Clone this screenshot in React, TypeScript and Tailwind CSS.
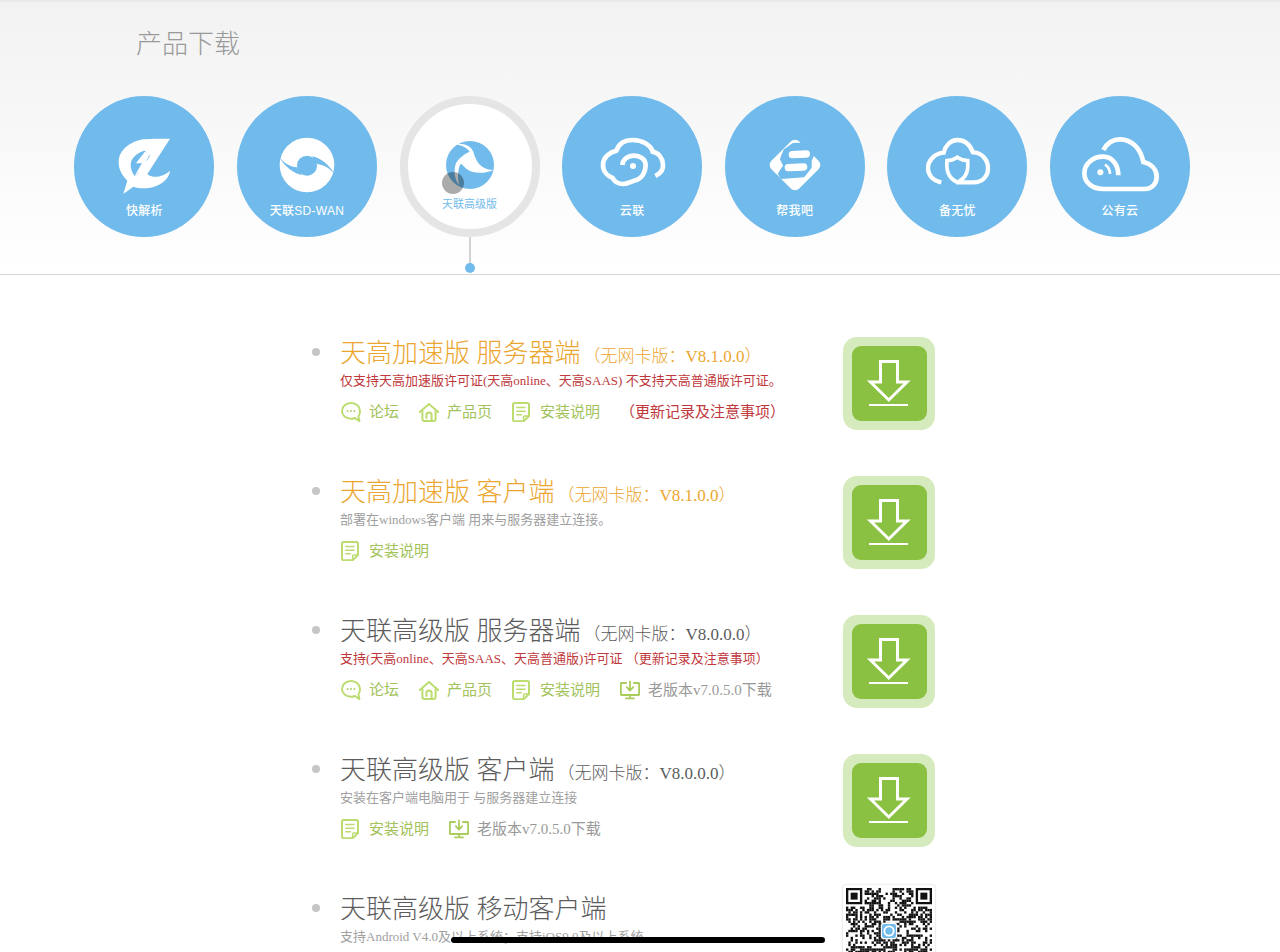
const CJK = "font-['Liberation_Serif','Noto_Sans_CJK_SC',serif]";

function FastIcon() {
  return (
    <svg viewBox="0 0 180 180" className="w-[60px] h-[60px] overflow-visible" fill="#fff">
      <path d="M168 14 C130 14 105 14 88 16 C45 24 14 50 14 85 C14 107 24 124 40 140 L28 180 L58 158 C78 165 105 165 128 155 C152 145 165 130 168 110 C155 122 135 130 118 128 C110 127 104 124 100 120 Z" />
      <path fill="#71bbec" d="M92 50 C70 55 50 72 50 92 C50 105 55 118 62 126 L72 118 L108 66 Z" />
      <path d="M92 54 L66 88 L84 88 L62 125 L114 82 L96 82 L110 56 Z" />
    </svg>
  );
}

function WanIcon() {
  return (
    <svg viewBox="0 0 180 180" className="w-[60px] h-[60px] overflow-visible">
      <circle cx="90" cy="93" r="82" fill="#fff" />
      <circle cx="90" cy="95" r="30" fill="#71bbec" />
      <path fill="#71bbec" d="M6 68 C22 88 40 98 60 100 L75 123 C50 118 25 100 6 68 Z" />
      <path fill="#71bbec" d="M174 122 C158 102 140 92 120 90 L105 67 C130 72 155 90 174 122 Z" />
    </svg>
  );
}

function AdvancedIcon() {
  return (
    <svg viewBox="0 0 180 180" className="w-[60px] h-[60px] overflow-visible">
      <circle cx="90" cy="93" r="72" fill="#71bbec" />
      <path fill="#fff" d="M45 30 C70 26 93 34 100 53 C107 76 117 106 160 108 C135 120 95 120 77 103 C67 93 63 86 60 93 C53 108 53 133 57 153 C45 138 40 113 47 90 C55 73 73 60 89 53 C80 40 65 34 45 30 Z" />
    </svg>
  );
}

function LinkCloudIcon() {
  return (
    <svg viewBox="0 0 180 180" className="w-[60px] h-[60px] overflow-visible" fill="none" stroke="#fff" strokeWidth="14" strokeLinecap="butt">
      <path d="M160 126 C176 118 185 106 183 90 C181 70 168 56 152 53 C146 32 120 18 93 18 C68 18 50 30 43 50 C20 56 3 72 3 93 C3 112 16 126 32 132 C38 144 50 150 63 150 C80 150 92 140 104 138 C120 132 131 114 131 93 C131 76 114 65 96 65 C78 65 62 76 61 93" />
      <circle cx="93" cy="96" r="9" fill="#fff" stroke="none" />
    </svg>
  );
}

function HelpIcon() {
  return (
    <svg viewBox="0 0 180 180" className="w-[60px] h-[60px] overflow-visible">
      <rect x="31" y="34" width="118" height="118" rx="18" fill="#fff" transform="rotate(45 90 93)" />
      <path fill="#71bbec" stroke="#71bbec" strokeWidth="10" strokeLinejoin="round" d="M85 32 L145 30 L150 45 L135 80 L135 100 L115 125 L50 130 L44 120 L60 95 L50 75 L60 50 Z" />
      <path stroke="#fff" strokeWidth="22" strokeLinecap="round" d="M82 62 L124 60 M70 101 L116 99" fill="none" />
    </svg>
  );
}

function BackupIcon() {
  return (
    <svg viewBox="0 0 180 180" className="w-[60px] h-[60px] overflow-visible" fill="none" stroke="#fff" strokeWidth="13">
      <path d="M43 145 C15 140 3 120 3 103 C3 78 25 58 50 56 C55 35 70 18 92 18 C115 18 130 35 138 55 C165 55 183 78 183 103 C183 128 165 145 140 145 L88 145" />
      <path strokeWidth="11" d="M91 70 C80 78 70 80 60 80 C58 105 60 130 91 145 C122 130 124 105 122 80 C112 80 102 78 91 70 Z" />
    </svg>
  );
}

function PublicIcon() {
  return (
    <svg viewBox="0 0 180 180" className="w-[60px] h-[60px] overflow-visible" fill="none" stroke="#fff" strokeWidth="14">
      <path d="M40 48 C52 26 70 16 90 16 C126 16 152 44 160 84 C184 90 200 106 200 128 C200 150 184 165 165 165 L40 165 C8 165 -17 146 -17 118 C-17 90 8 68 40 68 C66 68 85 92 85 124" />
      <path strokeWidth="8" d="M45 92 C54 98 60 108 60 120" />
      <circle cx="31" cy="115" r="9" fill="#fff" stroke="none" />
    </svg>
  );
}

function ChatIcon() {
  return (
    <svg viewBox="0 0 20 20" className="w-5 h-5 shrink-0" fill="none" stroke="#bcdc70" strokeWidth="2">
      <path d="M10 1 C5 1 1 4.4 1 9 C1 13.4 5 16.8 10 16.8 C11.4 16.8 13 16.4 14 16 L18.4 19.2 L17.4 14.4 C18.6 13 19 11 19 9 C19 4.4 15 1 10 1 Z" strokeLinejoin="round" />
      <circle cx="6.6" cy="9" r=".9" fill="#a9cc5a" stroke="none" />
      <circle cx="10" cy="9" r=".9" fill="#a9cc5a" stroke="none" />
      <circle cx="13.4" cy="9" r=".9" fill="#a9cc5a" stroke="none" />
    </svg>
  );
}

function HomeIcon() {
  return (
    <svg viewBox="0 0 20 20" className="w-5 h-5 shrink-0" fill="none" stroke="#bcdc70" strokeWidth="2" strokeLinecap="round" strokeLinejoin="round">
      <path d="M.8 10 L10 2 L19.2 10" />
      <path d="M3.4 9 L3.4 17 C3.4 18.2 4.2 19 5.4 19 L14.6 19 C15.8 19 16.6 18.2 16.6 17 L16.6 9" />
      <path d="M7.4 16 L7.4 13 C7.4 11.4 8.6 10.4 10 10.4 C11.4 10.4 12.6 11.4 12.6 13 L12.6 18.6" />
    </svg>
  );
}

function DocIcon() {
  return (
    <svg viewBox="0 0 20 20" className="w-5 h-5 shrink-0" fill="none" stroke="#bcdc70" strokeWidth="2" strokeLinecap="round" strokeLinejoin="round">
      <path d="M2.6 1 L15.4 1 C16.4 1 17 1.6 17 2.6 L17 14 L11.6 19.2 L2.6 19.2 C1.6 19.2 1 18.6 1 17.6 L1 2.6 C1 1.6 1.6 1 2.6 1 Z" />
      <path strokeWidth="1.5" d="M4.8 5.6 L13 5.6 M4.8 9.2 L13 9.2 M4.8 12.8 L9.4 12.8" />
      <path strokeWidth="1.5" d="M11.6 19 L11.6 15 C11.6 14.4 12 14 12.6 14 L17 14" />
    </svg>
  );
}

function OldIcon() {
  return (
    <svg viewBox="0 0 20 20" className="w-5 h-5 shrink-0" fill="none" stroke="#a9cc5a" strokeWidth="2" strokeLinecap="round" strokeLinejoin="round">
      <path d="M6 3 L1.8 3 C1.2 3 .8 3.4 .8 4 L.8 14 C.8 14.6 1.2 15 1.8 15 L18.2 15 C18.8 15 19.2 14.6 19.2 14 L19.2 4 C19.2 3.4 18.8 3 18.2 3 L14 3" />
      <path strokeWidth="1.7" d="M10 1.4 L10 10 M6.8 7.2 L10 10.6 L13.2 7.2" />
      <path strokeWidth="1.7" d="M6 18.4 L14 18.4 M10 15 L10 18.4" />
    </svg>
  );
}

function DownloadButton() {
  return (
    <div className="w-[92px] h-[93px] shrink-0 rounded-[14px] bg-[#d6ebbd] flex items-center justify-center">
      <div className="w-[75px] h-[75px] rounded-[9px] bg-[#8bc143]">
        <svg viewBox="0 0 75 75" className="w-[75px] h-[75px]" fill="none" stroke="#fff">
          <path strokeWidth="3" d="M28.5 15.5 L45.5 15.5 L45.5 36 L55 36 L36.8 54 L18.5 36 L28.5 36 Z" />
          <path strokeWidth="2.2" d="M17 59 L56 59" />
        </svg>
      </div>
    </div>
  );
}

function Qr() {
  const n = 37;
  const cells: React.ReactNode[] = [];
  const inFinder = (x: number, y: number) =>
    (x < 8 && y < 8) || (x >= n - 8 && y < 8) || (x < 8 && y >= n - 8);
  let seed = 12345;
  for (let y = 0; y < n; y++) {
    for (let x = 0; x < n; x++) {
      seed = (seed * 1103515245 + 12345) & 0x7fffffff;
      if (!inFinder(x, y) && ((seed >> 16) & 3) < 2) {
        cells.push(<rect key={`${x}-${y}`} x={x} y={y} width="1.02" height="1.02" />);
      }
    }
  }
  const finder = (x: number, y: number) => (
    <g key={`f${x}-${y}`}>
      <path fillRule="evenodd" d={`M${x} ${y}h7v7h-7z M${x + 1} ${y + 1}v5h5v-5z`} />
      <rect x={x + 2} y={y + 2} width="3" height="3" />
    </g>
  );
  return (
    <div className="w-[92px] h-[92px] shrink-0 -mt-[8px] bg-white rounded-[3px] shadow-[0_0_2px_rgba(0,0,0,0.25)] p-[3px]">
      <svg viewBox="0 0 37 37" className="w-[86px] h-[86px]" fill="#111">
        {cells}
        {finder(0, 0)}
        {finder(30, 0)}
        {finder(0, 30)}
        <rect x="15" y="15" width="7" height="7" rx="1" fill="#fff" />
        <rect x="15.5" y="15.5" width="6" height="6" rx="1" fill="#71bbec" />
        <circle cx="18.5" cy="18.5" r="2" fill="none" stroke="#fff" strokeWidth=".8" />
      </svg>
    </div>
  );
}

function Circle({ label, icon }: { label: string; icon: React.ReactNode }) {
  return (
    <div className="w-[140px] h-[141px] shrink-0 rounded-full bg-[#71bbec] flex flex-col items-center pt-[38px]">
      {icon}
      <div className="mt-[9px] text-[12px] leading-[16px] tracking-[0.3px] text-white font-['Liberation_Sans','Noto_Sans_CJK_SC',sans-serif] font-medium">
        {label}
      </div>
    </div>
  );
}

function ActiveCircle() {
  return (
    <div className="relative w-[140px] h-[141px] shrink-0">
      <div className="w-[140px] h-[141px] rounded-full bg-white border-[8px] border-[#e5e5e5] flex flex-col items-center pt-[30px]">
        <AdvancedIcon />
        <div className="mt-[2px] text-[11px] leading-[16px] text-[#71bbec] font-['Liberation_Sans','Noto_Sans_CJK_SC',sans-serif]">
          天联高级版
        </div>
      </div>
      <div className="absolute left-[42px] top-[76px] w-[22px] h-[22px] rounded-full bg-[rgba(0,0,0,0.33)]" />
      <div className="absolute left-[69px] top-[141px] w-[2px] h-[27px] bg-[#d3d3d3]" />
      <div className="absolute left-[65px] top-[167px] w-[10px] h-[10px] rounded-full bg-[#71bbec]" />
    </div>
  );
}

type LinkKind = "chat" | "home" | "doc" | "old" | "log";

function Links({ items }: { items: LinkKind[] }) {
  return (
    <div className={`flex items-center gap-5 mt-[10px] h-[22px] pl-px text-[15px] leading-[22px] ${CJK}`}>
      {items.map((k) => {
        if (k === "chat")
          return (
            <div key={k} className="flex items-center gap-2 text-[#a2c25a]">
              <ChatIcon />
              <span>论坛</span>
            </div>
          );
        if (k === "home")
          return (
            <div key={k} className="flex items-center gap-2 text-[#a2c25a]">
              <HomeIcon />
              <span>产品页</span>
            </div>
          );
        if (k === "doc")
          return (
            <div key={k} className="flex items-center gap-2 text-[#a2c25a]">
              <DocIcon />
              <span>安装说明</span>
            </div>
          );
        if (k === "old")
          return (
            <div key={k} className="flex items-center gap-2 text-[#999999]">
              <OldIcon />
              <span>老版本v7.0.5.0下载</span>
            </div>
          );
        return (
          <span key={k} className="text-[#c0383c]">
            （更新记录及注意事项）
          </span>
        );
      })}
    </div>
  );
}

function Row({
  title,
  version,
  tone,
  sub,
  subRed,
  links,
  qr,
}: {
  title: string;
  version?: string;
  tone: "orange" | "gray";
  sub: string;
  subRed?: boolean;
  links?: LinkKind[];
  qr?: boolean;
}) {
  const color = tone === "orange" ? "text-[#eba630]" : "text-[#5c5c5c]";
  return (
    <div className="flex items-start justify-between w-[623px]">
      <div className="flex items-start">
        <div className="w-2 h-2 rounded-full bg-[#c6c6c6] mt-[11px] mr-5 shrink-0" />
        <div className={CJK}>
          <div className={`mt-[2px] h-[30px] leading-[30px] text-[26px] font-light whitespace-nowrap ${color}`}>
            {title}
            {version && <span className="text-[17px] ml-[3px]">（无网卡版：{version}）</span>}
          </div>
          <div
            className={`mt-[2px] h-[20px] leading-[20px] text-[13px] whitespace-nowrap ${
              subRed ? "text-[#c0383c]" : "text-[#a0a0a0]"
            }`}
          >
            {sub}
          </div>
          {links && <Links items={links} />}
        </div>
      </div>
      {qr ? <Qr /> : <DownloadButton />}
    </div>
  );
}

export default function App() {
  return (
    <div className="relative w-[1280px] h-[952px] overflow-hidden bg-white">
      <header className="h-[275px] border-t-2 border-b border-t-[#e9e9e9] border-b-[#d6d6d6] bg-gradient-to-b from-[#f2f2f2] to-white">
        <h1 className="pl-[136px] pt-[22px] h-[94px] text-[26px] leading-[36px] font-light text-[#999999] font-['Noto_Sans_CJK_SC',sans-serif]">
          产品下载
        </h1>
        <div className="flex pl-[74.4px] gap-[22.6px]">
          <Circle label="快解析" icon={<FastIcon />} />
          <Circle label="天联SD-WAN" icon={<WanIcon />} />
          <ActiveCircle />
          <Circle label="云联" icon={<LinkCloudIcon />} />
          <Circle label="帮我吧" icon={<HelpIcon />} />
          <Circle label="备无忧" icon={<BackupIcon />} />
          <Circle label="公有云" icon={<PublicIcon />} />
        </div>
      </header>
      <main className="pl-[312px] pt-[62px] flex flex-col gap-[46px]">
        <Row
          title="天高加速版 服务器端"
          version="V8.1.0.0"
          tone="orange"
          sub="仅支持天高加速版许可证(天高online、天高SAAS) 不支持天高普通版许可证。"
          subRed
          links={["chat", "home", "doc", "log"]}
        />
        <Row
          title="天高加速版 客户端"
          version="V8.1.0.0"
          tone="orange"
          sub="部署在windows客户端 用来与服务器建立连接。"
          links={["doc"]}
        />
        <Row
          title="天联高级版 服务器端"
          version="V8.0.0.0"
          tone="gray"
          sub="支持(天高online、天高SAAS、天高普通版)许可证 （更新记录及注意事项）"
          subRed
          links={["chat", "home", "doc", "old"]}
        />
        <Row
          title="天联高级版 客户端"
          version="V8.0.0.0"
          tone="gray"
          sub="安装在客户端电脑用于 与服务器建立连接"
          links={["doc", "old"]}
        />
        <Row
          title="天联高级版 移动客户端"
          tone="gray"
          sub="支持Android V4.0及以上系统；支持iOS9.0及以上系统"
          qr
        />
      </main>
      <div className="absolute left-[451px] top-[937px] w-[374px] h-[6px] rounded-full bg-black" />
    </div>
  );
}
